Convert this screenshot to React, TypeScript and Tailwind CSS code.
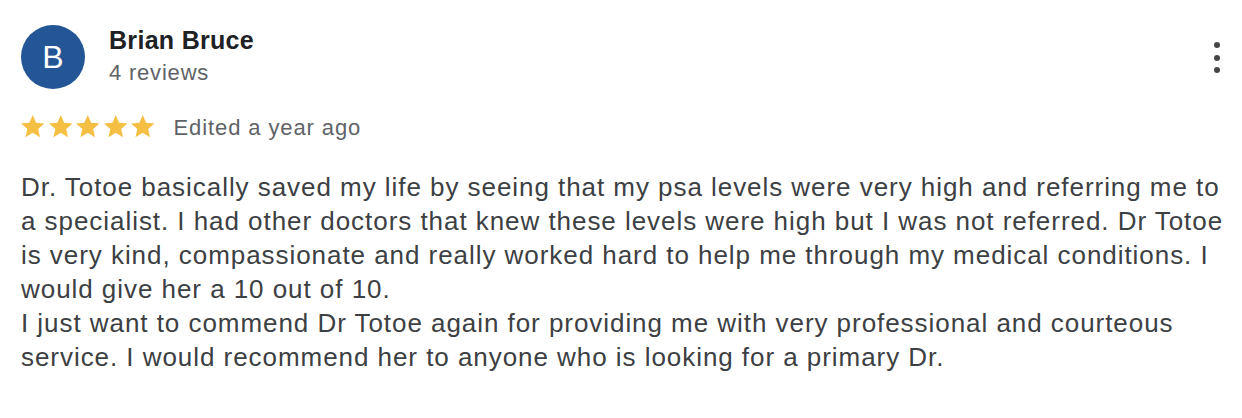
import React from "react";

const Star = () => (
  <svg width="27.5" height="27" viewBox="0 0 24 24" className="shrink-0">
    <path
      d="M12 1.8l3 6.9 7.4.6-5.6 4.9 1.7 7.3L12 17.6l-6.5 3.9 1.7-7.3-5.6-4.9 7.4-.6z"
      fill="#F4BF42"
    />
  </svg>
);

export default function App() {
  return (
    <div
      className="w-[1242px] h-[418px] bg-white overflow-hidden pl-[21px] pr-[14px] pt-[25px]"
      style={{ fontFamily: "'Liberation Sans', Arial, sans-serif" }}
    >
      <div className="flex items-start">
        <div className="w-[64px] h-[64px] rounded-full bg-[#245595] flex items-center justify-center text-white text-[32px] leading-none shrink-0">
          B
        </div>
        <div className="ml-[24px] flex-1">
          <div className="text-[25px] font-bold text-[#202124] leading-[30px] tracking-[0.3px]">Brian Bruce</div>
          <div className="text-[22px] text-[#5f6368] leading-[28px] mt-[4px] tracking-[0.8px]">4 reviews</div>
        </div>
        <div className="flex flex-col items-center gap-[6.5px] mt-[17px] mr-[8px]">
          <span className="w-[6px] h-[6px] rounded-full bg-[#444746]" />
          <span className="w-[6px] h-[6px] rounded-full bg-[#444746]" />
          <span className="w-[6px] h-[6px] rounded-full bg-[#444746]" />
        </div>
      </div>
      <div className="flex items-center mt-[22px]">
        <div className="flex -ml-[2px]">
          <Star />
          <Star />
          <Star />
          <Star />
          <Star />
        </div>
        <span className="ml-[17px] text-[22px] text-[#5f6368] leading-[28px] tracking-[0.9px] mt-[3px]">Edited a year ago</span>
      </div>
      <div className="mt-[28px] text-[26px] leading-[34px] text-[#3c4043] tracking-[0.95px]">
        Dr. Totoe basically saved my life by seeing that my psa levels were very high and referring me to a specialist. I had other doctors that knew these levels were high but I was not referred. Dr Totoe is very kind, compassionate and really worked hard to help me through my medical conditions. I would give her a 10 out of 10.
        <br />
        I just want to commend Dr Totoe again for providing me with very professional and courteous service. I would recommend her to anyone who is looking for a primary Dr.
      </div>
    </div>
  );
}
